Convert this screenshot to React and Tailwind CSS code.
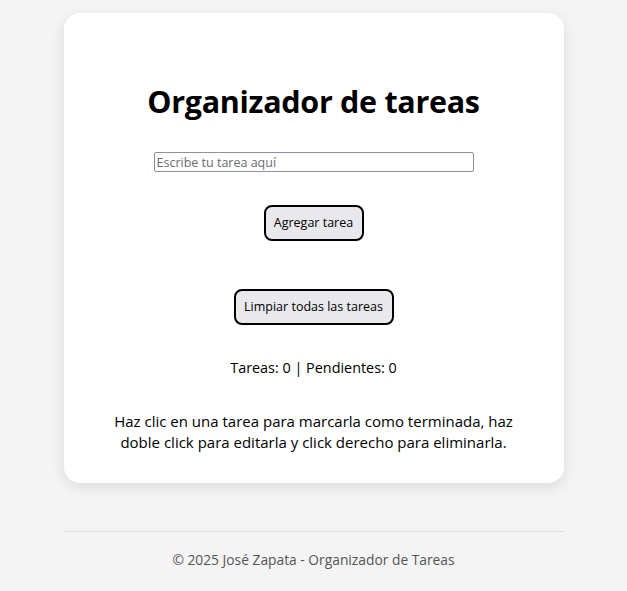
export default function App() {
  const font = { fontFamily: '"Open Sans", "Noto Sans", sans-serif' }

  return (
    <div className="min-h-[591px] bg-[#f4f4f4] pt-[13px] font-['Open_Sans',sans-serif] text-black">
      <main className="mx-auto w-[500px] rounded-[16px] bg-white pt-[68px] pb-[30px] flex flex-col items-center shadow-[0_4px_14px_rgba(0,0,0,0.1)]">
        <h1 className="text-[30.5px] leading-[40px] font-bold tracking-[-0.3px]">Organizador de tareas</h1>

        <input
          type="text"
          placeholder="Escribe tu tarea aquí"
          className="mt-[31px] w-[320px] h-[20px] border border-[#8f8f9d] rounded-[2px] px-[2px] text-[12.5px] leading-[16px] placeholder:text-[#6b6b76] outline-none"
        />

        <button className="mt-[33px] w-[100px] h-[36px] rounded-[8px] border-2 border-black bg-[#e9e9ed] text-[12.5px] leading-none">
          Agregar tarea
        </button>

        <button className="mt-[48px] w-[160px] h-[36px] rounded-[8px] border-2 border-black bg-[#e9e9ed] text-[12.5px] leading-none">
          Limpiar todas las tareas
        </button>

        <p className="mt-[32px] text-[14.4px] leading-[21px]">Tareas: 0 | Pendientes: 0</p>

        <p className="mt-[33px] text-[15px] leading-[21px] text-center">
          Haz clic en una tarea para marcarla como terminada, haz
          <br />
          doble click para editarla y click derecho para eliminarla.
        </p>
      </main>

      <footer className="mx-auto w-[500px] mt-[48px] border-t border-[#dddddd] pt-[18px] text-center text-[13.8px] leading-[20px] text-[#555555]" style={font}>
        © 2025 José Zapata - Organizador de Tareas
      </footer>
    </div>
  )
}
